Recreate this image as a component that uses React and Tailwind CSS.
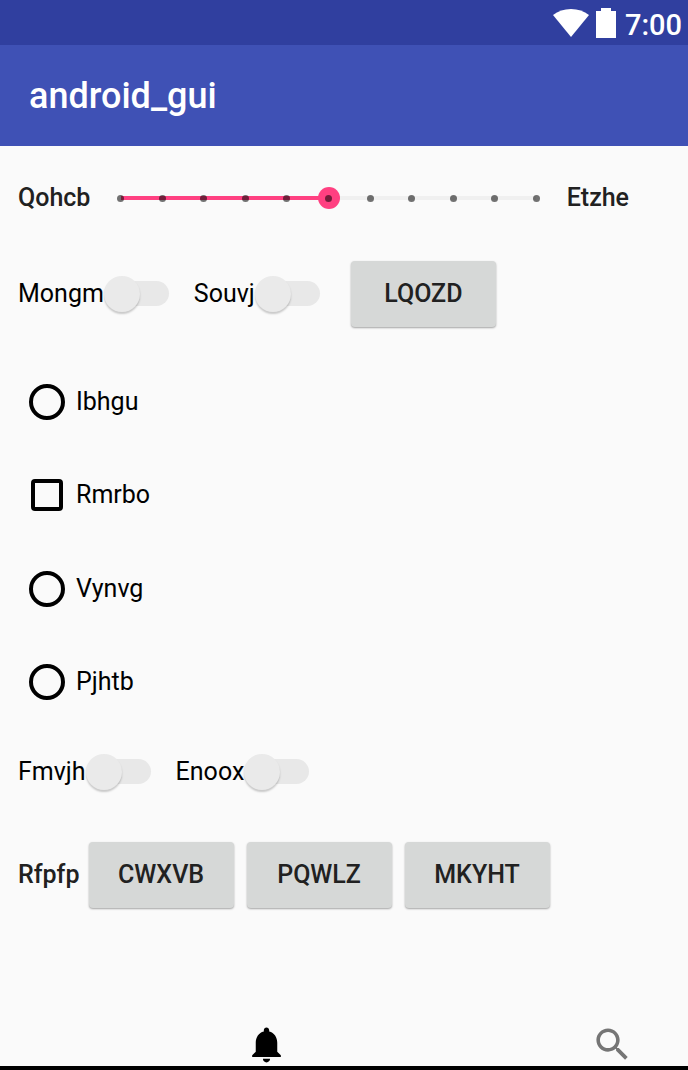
import { useState } from "react";

const STEPS = 10;

function StatusBar() {
  return (
    <div className="flex h-[45px] items-center justify-end bg-[#303f9f] pr-[6px] text-white">
      <svg viewBox="0 0 36 28" className="mr-[7px] h-[28px] w-[36px]" aria-hidden="true">
        <path d="M18 28 0 6C5 2 11 0 18 0s13 2 18 6Z" fill="currentColor" />
      </svg>
      <svg viewBox="0 0 20 30" className="mr-[9px] h-[30px] w-[20px]" aria-hidden="true">
        <path d="M5 0h10v3h5v27H0V3h5Z" fill="currentColor" />
      </svg>
      <span className="pt-1 text-[29px] leading-[34px] font-medium">7:00</span>
    </div>
  );
}

function DiscreteSlider() {
  const [value, setValue] = useState(5);
  return (
    <div className="relative flex h-[36px] flex-1 items-center">
      <div className="absolute inset-x-[11px] h-[4px] bg-[#f0f0f0]">
        <div className="h-full bg-[#ff4081]" style={{ width: `${(value / STEPS) * 100}%` }} />
      </div>
      <input
        type="range"
        min="0"
        max={STEPS}
        value={value}
        onChange={(e) => setValue(Number(e.target.value))}
        aria-label="Qohcb to Etzhe"
        className="relative m-0 h-[36px] w-full appearance-none bg-transparent [&::-webkit-slider-thumb]:h-[22px] [&::-webkit-slider-thumb]:w-[22px] [&::-webkit-slider-thumb]:appearance-none [&::-webkit-slider-thumb]:rounded-full [&::-webkit-slider-thumb]:bg-[#ff4081]"
      />
      <div className="pointer-events-none absolute inset-x-[7px] flex justify-between">
        {Array.from({ length: STEPS + 1 }, (_, i) => (
          <span key={i} className="h-[7px] w-[7px] rounded-full bg-black/55" />
        ))}
      </div>
    </div>
  );
}

function Switch({ label }) {
  return (
    <label className="flex items-center">
      <span>{label}</span>
      <input
        type="checkbox"
        role="switch"
        className="relative h-[36px] w-[65px] appearance-none before:absolute before:top-[5px] before:right-0 before:h-[25px] before:w-[56px] before:rounded-full before:bg-[#e8e8e8] after:absolute after:top-0 after:left-0 after:h-[36px] after:w-[36px] after:rounded-full after:bg-[#eaeaea] after:shadow-[0_2px_2px_rgba(0,0,0,0.2)] checked:before:bg-[#ff4081]/40 checked:after:left-[29px] checked:after:bg-[#ff4081]"
      />
    </label>
  );
}

function RaisedButton({ children }) {
  return (
    <button
      type="button"
      className="h-[66px] w-[145px] rounded-[4px] bg-[#d6d8d7] font-medium text-[#212121] shadow-[0_1px_2px_rgba(0,0,0,0.35)]"
    >
      {children}
    </button>
  );
}

function Radio({ label }) {
  return (
    <label className="flex items-center gap-[11px]">
      <input
        type="radio"
        name={label}
        className="h-[36px] w-[36px] appearance-none rounded-full border-4 border-black checked:bg-[#ff4081]"
      />
      <span>{label}</span>
    </label>
  );
}

function Checkbox({ label }) {
  return (
    <label className="flex items-center gap-[11px]">
      <span className="flex w-[36px] justify-center">
        <input
          type="checkbox"
          className="h-[32px] w-[32px] appearance-none rounded-[4px] border-4 border-black checked:bg-[#ff4081]"
        />
      </span>
      <span>{label}</span>
    </label>
  );
}

export default function App() {
  return (
    <div className="flex min-h-screen flex-col bg-[#fafafa] font-[Roboto,sans-serif] text-[25px] leading-[30px] text-black">
      <StatusBar />
      <header className="flex h-[101px] items-center bg-[#3f51b5] px-[29px]">
        <h1 className="text-[36px] leading-[42px] font-medium text-white">android_gui</h1>
      </header>

      <main>
        <div className="flex h-[104px] items-center pr-[59px] pl-[18px] font-medium text-[#212121]">
          <span>Qohcb</span>
          <div className="flex flex-1 px-[20px]">
            <DiscreteSlider />
          </div>
          <span>Etzhe</span>
        </div>

        <div className="flex h-[88px] items-center px-[18px]">
          <div className="mr-[31px] flex gap-[25px]">
            <Switch label="Mongm" />
            <Switch label="Souvj" />
          </div>
          <RaisedButton>LQOZD</RaisedButton>
        </div>

        <div className="mt-[17px] grid h-[374px] grid-rows-4 px-[29px]">
          <Radio label="Ibhgu" />
          <Checkbox label="Rmrbo" />
          <Radio label="Vynvg" />
          <Radio label="Pjhtb" />
        </div>

        <div className="flex h-[86px] items-center gap-[25px] px-[18px]">
          <Switch label="Fmvjh" />
          <Switch label="Enoox" />
        </div>

        <div className="flex h-[120px] items-center px-[18px]">
          <span className="mr-[9px] font-medium text-[#212121]">Rfpfp</span>
          <div className="flex gap-[13px]">
            <RaisedButton>CWXVB</RaisedButton>
            <RaisedButton>PQWLZ</RaisedButton>
            <RaisedButton>MKYHT</RaisedButton>
          </div>
        </div>
      </main>

      <nav className="mt-auto grid grid-cols-2 border-b-4 border-black">
        <div className="flex justify-end pr-[56px]">
          <button type="button" aria-label="Notifications">
            <svg viewBox="0 0 24 24" className="block h-[43px] w-[43px]" fill="#000">
              <path d="M12 22c1.1 0 2-.9 2-2h-4c0 1.1.89 2 2 2zm6-6v-5c0-3.07-1.64-5.64-4.5-6.32V4c0-.83-.67-1.5-1.5-1.5s-1.5.67-1.5 1.5v.68C7.63 5.36 6 7.92 6 11v5l-2 2v1h16v-1l-2-2z" />
            </svg>
          </button>
        </div>
        <div className="flex justify-end pr-[54px]">
          <button type="button" aria-label="Search">
            <svg viewBox="0 0 24 24" className="block h-[43px] w-[43px]" fill="#757575">
              <path d="M15.5 14h-.79l-.28-.27C15.41 12.59 16 11.11 16 9.5 16 5.91 13.09 3 9.5 3S3 5.91 3 9.5 5.91 16 9.5 16c1.61 0 3.09-.59 4.23-1.57l.27.28v.79l5 4.99L20.49 19l-4.99-5zm-6 0C7.01 14 5 11.99 5 9.5S7.01 5 9.5 5 14 7.01 14 9.5 11.99 14 9.5 14z" />
            </svg>
          </button>
        </div>
      </nav>
    </div>
  );
}
